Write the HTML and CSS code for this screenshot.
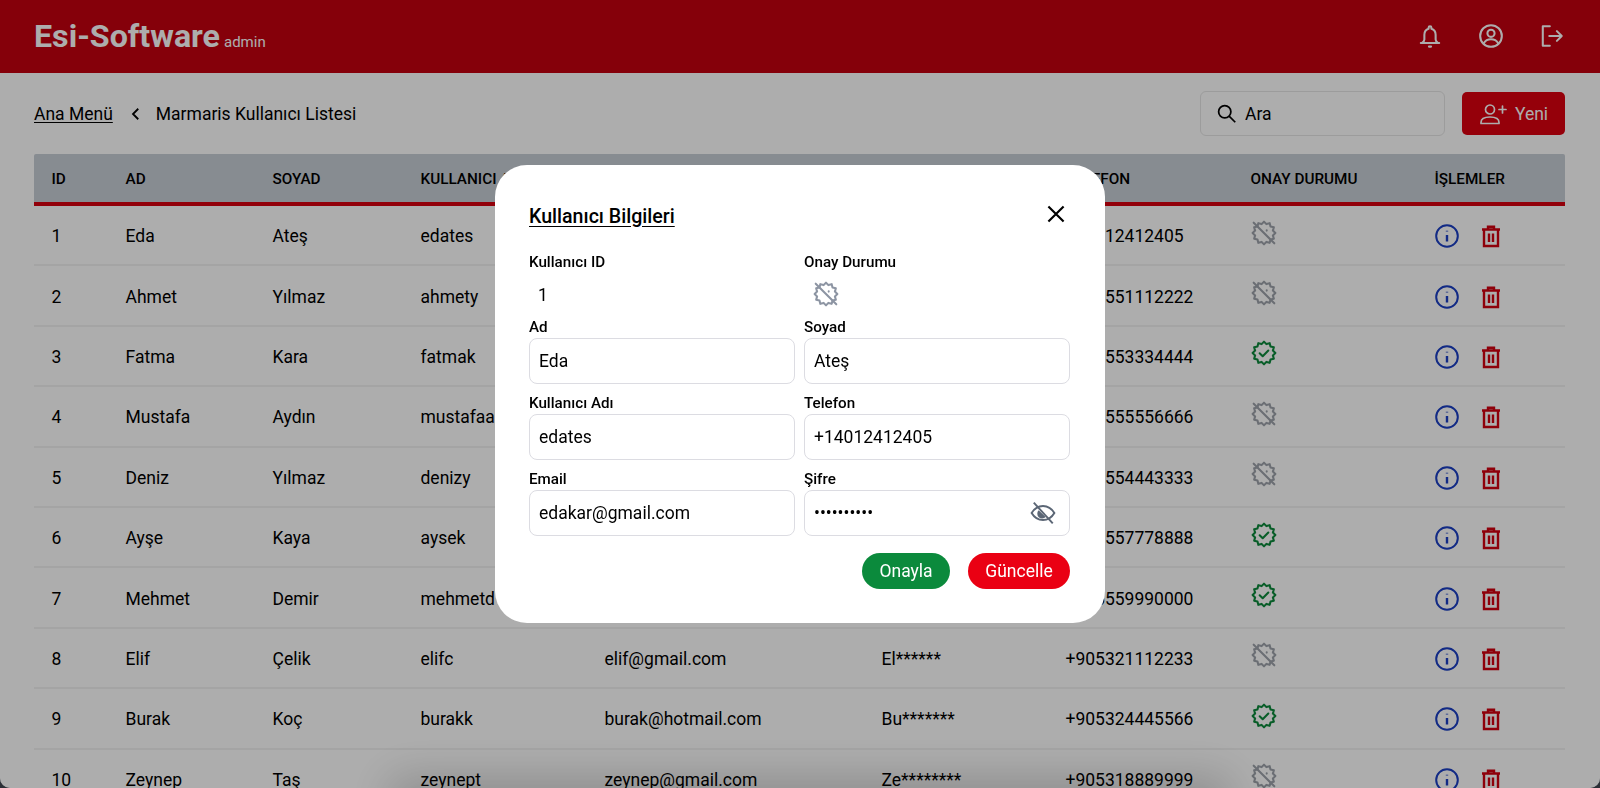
FILE: index.html
```html
<!DOCTYPE html>
<html lang="tr">
<head>
<meta charset="utf-8">
<title>Marmaris Kullanıcı Listesi</title>
<link rel="stylesheet" href="styles.css">
</head>
<body>
<svg class="defs" aria-hidden="true">
  <symbol id="rosette" viewBox="0 0 24 24"><polygon points="22.5,12 20.21,14.2 21.09,17.25 18.01,18.01 17.25,21.09 14.2,20.21 12,22.5 9.8,20.21 6.75,21.09 5.99,18.01 2.91,17.25 3.79,14.2 1.5,12 3.79,9.8 2.91,6.75 5.99,5.99 6.75,2.91 9.8,3.79 12,1.5 14.2,3.79 17.25,2.91 18.01,5.99 21.09,6.75 20.21,9.8"/><path d="M8 12.3l2.8 2.7 5.2-5.3"/></symbol>
  <symbol id="rosette-off" viewBox="0 0 24 24"><polygon points="22.5,12 20.21,14.2 21.09,17.25 18.01,18.01 17.25,21.09 14.2,20.21 12,22.5 9.8,20.21 6.75,21.09 5.99,18.01 2.91,17.25 3.79,14.2 1.5,12 3.79,9.8 2.91,6.75 5.99,5.99 6.75,2.91 9.8,3.79 12,1.5 14.2,3.79 17.25,2.91 18.01,5.99 21.09,6.75 20.21,9.8"/><path d="M2.5 2.5l19 19M14.5 9.4v.4"/></symbol>
  <symbol id="info" viewBox="0 0 24 24"><circle cx="12" cy="12" r="10.8"/><path class="info-mark" d="M12 11v6.500M12 6.800v.8"/></symbol>
  <symbol id="trash" viewBox="0 0 24 24"><path d="M3 5.500h18M9 5.500V2.800h6v2.700M5 5.500v16.500h14V5.500M10 9.500v8.500M14 9.500v8.500"/></symbol>
</svg>
<div class="page">
  <header class="topbar">
    <div class="brand"><span class="brand-name">Esi-Software</span><span class="brand-role">admin</span></div>
    <div class="top-icons">
      <svg class="top-icon" viewBox="0 0 24 24"><path d="M12 3a1.300 1.300 0 0 1 1.300 1.300v.9c2.600.7 3.900 2.800 3.900 5.600v4.400c0 1.400.8 2.300 2.300 3.300H4.500c1.500-1 2.300-1.900 2.300-3.300v-4.400c0-2.800 1.300-4.900 3.900-5.600v-.9A1.300 1.300 0 0 1 12 3zM3.500 18.500h17M11 21.800h2"/></svg>
      <svg class="top-icon" viewBox="0 0 24 24"><circle cx="12" cy="12" r="10"/><circle cx="12" cy="9.500" r="3.300"/><path d="M5.500 18.500c1.300-2.300 3.600-3.500 6.500-3.500s5.200 1.200 6.500 3.500"/></svg>
      <svg class="top-icon" viewBox="0 0 24 24"><path d="M10 3H3.500v18H10M9.500 12H21M16.500 7.500L21 12l-4.500 4.500"/></svg>
    </div>
  </header>
  <main class="content">
    <div class="toolbar">
      <nav class="crumbs">
        <a class="crumb-link" href="#">Ana Menü</a>
        <svg class="crumb-sep" viewBox="0 0 24 24"><path d="M15 5l-7 7 7 7"/></svg>
        <span>Marmaris Kullanıcı Listesi</span>
      </nav>
      <div class="tools">
        <label class="search">
          <svg class="search-icon" viewBox="0 0 24 24"><circle cx="10" cy="10" r="7"/><path d="M15 15l7 7"/></svg>
          <input class="search-input" placeholder="Ara">
        </label>
        <button class="new-btn" type="button">
          <svg class="new-icon" viewBox="0 0 28 24"><circle cx="11" cy="7.500" r="4.500"/><path d="M2 21.500v-1c0-3.500 3-5.500 9-5.500s9 2 9 5.500v1zM23.500 4v7M20 7.500h7"/></svg>
          <span>Yeni</span>
        </button>
      </div>
    </div>
    <div class="table">
      <div class="row head"><div>ID</div><div>AD</div><div>SOYAD</div><div>KULLANICI ADI</div><div>EMAIL</div><div>ŞİFRE</div><div>TELEFON</div><div>ONAY DURUMU</div><div>İŞLEMLER</div></div>

      <div class="row"><div>1</div><div>Eda</div><div>Ateş</div><div>edates</div><div>edakar@gmail.com</div><div>Ed********</div><div>+14012412405</div><div><svg class="status off"><use href="#rosette-off"/></svg></div><div class="acts"><svg class="act info"><use href="#info"/></svg><svg class="act del"><use href="#trash"/></svg></div></div>
      <div class="row"><div>2</div><div>Ahmet</div><div>Yılmaz</div><div>ahmety</div><div>ahmet@gmail.com</div><div>Ah******</div><div>+905551112222</div><div><svg class="status off"><use href="#rosette-off"/></svg></div><div class="acts"><svg class="act info"><use href="#info"/></svg><svg class="act del"><use href="#trash"/></svg></div></div>
      <div class="row"><div>3</div><div>Fatma</div><div>Kara</div><div>fatmak</div><div>fatma@gmail.com</div><div>Fa******</div><div>+905553334444</div><div><svg class="status ok"><use href="#rosette"/></svg></div><div class="acts"><svg class="act info"><use href="#info"/></svg><svg class="act del"><use href="#trash"/></svg></div></div>
      <div class="row"><div>4</div><div>Mustafa</div><div>Aydın</div><div>mustafaa</div><div>mustafa@gmail.com</div><div>Mu******</div><div>+905555556666</div><div><svg class="status off"><use href="#rosette-off"/></svg></div><div class="acts"><svg class="act info"><use href="#info"/></svg><svg class="act del"><use href="#trash"/></svg></div></div>
      <div class="row"><div>5</div><div>Deniz</div><div>Yılmaz</div><div>denizy</div><div>deniz@gmail.com</div><div>De******</div><div>+905554443333</div><div><svg class="status off"><use href="#rosette-off"/></svg></div><div class="acts"><svg class="act info"><use href="#info"/></svg><svg class="act del"><use href="#trash"/></svg></div></div>
      <div class="row"><div>6</div><div>Ayşe</div><div>Kaya</div><div>aysek</div><div>ayse@gmail.com</div><div>Ay******</div><div>+905557778888</div><div><svg class="status ok"><use href="#rosette"/></svg></div><div class="acts"><svg class="act info"><use href="#info"/></svg><svg class="act del"><use href="#trash"/></svg></div></div>
      <div class="row"><div>7</div><div>Mehmet</div><div>Demir</div><div>mehmetd</div><div>mehmet@gmail.com</div><div>Me******</div><div>+905559990000</div><div><svg class="status ok"><use href="#rosette"/></svg></div><div class="acts"><svg class="act info"><use href="#info"/></svg><svg class="act del"><use href="#trash"/></svg></div></div>
      <div class="row"><div>8</div><div>Elif</div><div>Çelik</div><div>elifc</div><div>elif@gmail.com</div><div>El******</div><div>+905321112233</div><div><svg class="status off"><use href="#rosette-off"/></svg></div><div class="acts"><svg class="act info"><use href="#info"/></svg><svg class="act del"><use href="#trash"/></svg></div></div>
      <div class="row"><div>9</div><div>Burak</div><div>Koç</div><div>burakk</div><div>burak@hotmail.com</div><div>Bu*******</div><div>+905324445566</div><div><svg class="status ok"><use href="#rosette"/></svg></div><div class="acts"><svg class="act info"><use href="#info"/></svg><svg class="act del"><use href="#trash"/></svg></div></div>
      <div class="row"><div>10</div><div>Zeynep</div><div>Taş</div><div>zeynept</div><div>zeynep@gmail.com</div><div>Ze********</div><div>+905318889999</div><div><svg class="status off"><use href="#rosette-off"/></svg></div><div class="acts"><svg class="act info"><use href="#info"/></svg><svg class="act del"><use href="#trash"/></svg></div></div>
    </div>
  </main>
</div>

<div class="overlay">
  <section class="modal">
    <div class="modal-head">
      <h2 class="modal-title">Kullanıcı Bilgileri</h2>
      <svg class="close" viewBox="0 0 24 24"><path d="M5 5l14 14M19 5L5 19"/></svg>
    </div>
    <div class="form">
      <div class="field static"><span class="label">Kullanıcı ID</span><span class="static-value">1</span></div>
      <div class="field static"><span class="label">Onay Durumu</span><span class="static-value"><svg class="status modal-off"><use href="#rosette-off"/></svg></span></div>
      <label class="field"><span class="label">Ad</span><input class="input" value="Eda"></label>
      <label class="field"><span class="label">Soyad</span><input class="input" value="Ateş"></label>
      <label class="field"><span class="label">Kullanıcı Adı</span><input class="input" value="edates"></label>
      <label class="field"><span class="label">Telefon</span><input class="input" value="+14012412405"></label>
      <label class="field"><span class="label">Email</span><input class="input" value="edakar@gmail.com"></label>
      <label class="field"><span class="label">Şifre</span>
        <span class="password"><input class="input" type="password" value="edakar1234">
          <svg class="eye" viewBox="0 0 24 24"><path d="M1.500 12C4 7.800 7.800 5.500 12 5.500s8 2.300 10.500 6.500c-2.500 4.200-6.300 6.500-10.500 6.500S4 16.200 1.500 12z"/><path class="eye-fill" d="M8 9.500a4.500 4.500 0 0 0 6.500 6.300z"/><path d="M3.500 2.500l17.500 19"/></svg>
        </span>
      </label>
    </div>
    <div class="actions">
      <button class="pill approve" type="button">Onayla</button>
      <button class="pill update" type="button">Güncelle</button>
    </div>
  </section>
</div>
</body>
</html>
```
FILE: styles.css
```css
* { box-sizing: border-box; }
html, body { margin: 0; height: 100%; }
body {
  background: #2b2f36;
  font-family: Roboto, "Liberation Sans", sans-serif;
  font-size: 17.5px;
  color: #000;
  overflow: hidden;
}
.defs { position: absolute; width: 0; height: 0; }
.page {
  height: 788px;
  background: #fff;
  overflow: hidden;
  border-radius: 0 0 10px 10px;
}
.topbar {
  height: 73px;
  background: #c4000f;
  padding: 0 35px 2px 34px;
  display: flex;
  align-items: center;
  justify-content: space-between;
  color: #fff;
}
.brand { display: flex; align-items: baseline; gap: 4px; }
.brand-name { font-size: 32.2px; font-weight: 700; }
.brand-role { font-size: 15px; }
.top-icons { display: flex; gap: 35px; }
.top-icon { width: 26px; height: 26px; fill: none; stroke: #fff; stroke-width: 1.9; stroke-linecap: round; stroke-linejoin: round; }
.content { padding: 0 35px 0 34px; }
.toolbar { height: 81px; display: flex; align-items: center; justify-content: space-between; }
.crumbs { display: flex; align-items: center; }
.crumb-link { color: #000; text-decoration: underline; text-underline-offset: 2px; }
.crumb-sep { width: 18px; height: 18px; margin: 0 11px 0 14px; fill: none; stroke: #000; stroke-width: 2.4; }
.tools { display: flex; align-items: center; gap: 17px; }
.search {
  width: 245px; height: 45px;
  border: 1px solid #e6e6e6; border-radius: 6px;
  display: flex; align-items: center; padding-left: 15px; gap: 8px;
}
.search-icon { width: 21px; height: 21px; flex: none; fill: none; stroke: #000; stroke-width: 2; }
.search-input { width: 190px; border: 0; outline: 0; background: transparent; padding: 0; font: inherit; }
.search-input::placeholder { color: #000; opacity: 1; }
.new-btn {
  width: 103px; height: 43px;
  background: #dc000f; color: #fff;
  border: 0; border-radius: 5px;
  font: inherit;
  display: flex; align-items: center; justify-content: center; gap: 8px;
}
.new-icon { width: 28px; height: 24px; fill: none; stroke: #fff; stroke-width: 1.7; stroke-linejoin: round; stroke-linecap: round; }
.table { width: 1531px; }
.row {
  display: grid;
  grid-template-columns: 74px 147px 148px 184px 277px 184px 185px 184px 148px;
  height: 60.4px;
  padding-top: 2px;
  align-items: center;
  border-bottom: 2px solid #f2f2f2;
  background: #fff;
}
.row > div { padding-left: 17.5px; white-space: nowrap; }
.head {
  height: 52px;
  background: #c8ced6;
  border-bottom: 4px solid #d8000f;
  font-size: 15.3px;
  font-weight: 500;
  border-radius: 2px 2px 0 0;
}
.status { display: block; width: 26px; height: 26px; fill: none; stroke-width: 1.9; stroke-linejoin: round; stroke-linecap: round; margin-bottom: 7px; }
.off { stroke: #9ea3ab; }
.ok { stroke: #0d8a3c; }
.modal-off { stroke: #8d95a3; margin: -3px 0 0; }
.acts { display: flex; align-items: center; gap: 20px; }
.act { width: 24px; height: 24px; fill: none; stroke-width: 2; }
.info { stroke: #1b3fc4; }
.info-mark { stroke-width: 2.4; }
.del { stroke: #d2000f; stroke-width: 2.4; }
.overlay {
  position: fixed; inset: 0;
  background: rgba(0, 0, 0, 0.32);
  display: flex; align-items: center; justify-content: center;
  border-radius: 0 0 10px 10px;
  overflow: hidden;
}
.overlay::after {
  content: "";
  position: absolute; left: 400px; right: 380px; bottom: -30px; height: 30px;
  box-shadow: 0 0 45px 10px rgba(0, 0, 0, 0.2);
}
.modal {
  position: relative;
  z-index: 1;
  width: 610px; height: 458px;
  background: #fff;
  border-radius: 32px;
  padding: 36px 35px 0 34px;
}
.modal-head { display: flex; align-items: center; justify-content: space-between; height: 30px; margin-bottom: 20px; }
.modal-title { margin: 0; font-size: 19.6px; font-weight: 500; text-decoration: underline; text-underline-offset: 3px; }
.close { width: 26px; height: 26px; margin: 0 1px 5px 0; fill: none; stroke: #000; stroke-width: 2; }
.form { display: grid; grid-template-columns: 266px 266px; column-gap: 9px; row-gap: 7.5px; }
.field { display: block; }
.field.static { height: 57px; }
.label { display: block; height: 22.5px; line-height: 22px; font-size: 15.2px; font-weight: 500; }
.static-value { display: block; padding: 10px 0 0 9px; line-height: 22px; }
.input {
  display: block;
  width: 100%; height: 46px;
  padding: 0 9px;
  border: 1.5px solid #dcdce2; border-radius: 8px;
  background: #fff; color: #000;
  font: inherit; outline: 0;
}
.password { display: block; position: relative; }
.eye { position: absolute; right: 14px; top: 10px; width: 26px; height: 26px; fill: none; stroke: #5b6675; stroke-width: 1.8; }
.eye-fill { fill: #5b6675; stroke: none; }
.actions { display: flex; justify-content: flex-end; gap: 18px; margin-top: 17px; }
.pill { height: 36px; border: 0; border-radius: 18px; color: #fff; font: inherit; padding: 0; }
.approve { width: 88px; background: #0b8a3c; }
.update { width: 102px; background: #ea0013; }
```
